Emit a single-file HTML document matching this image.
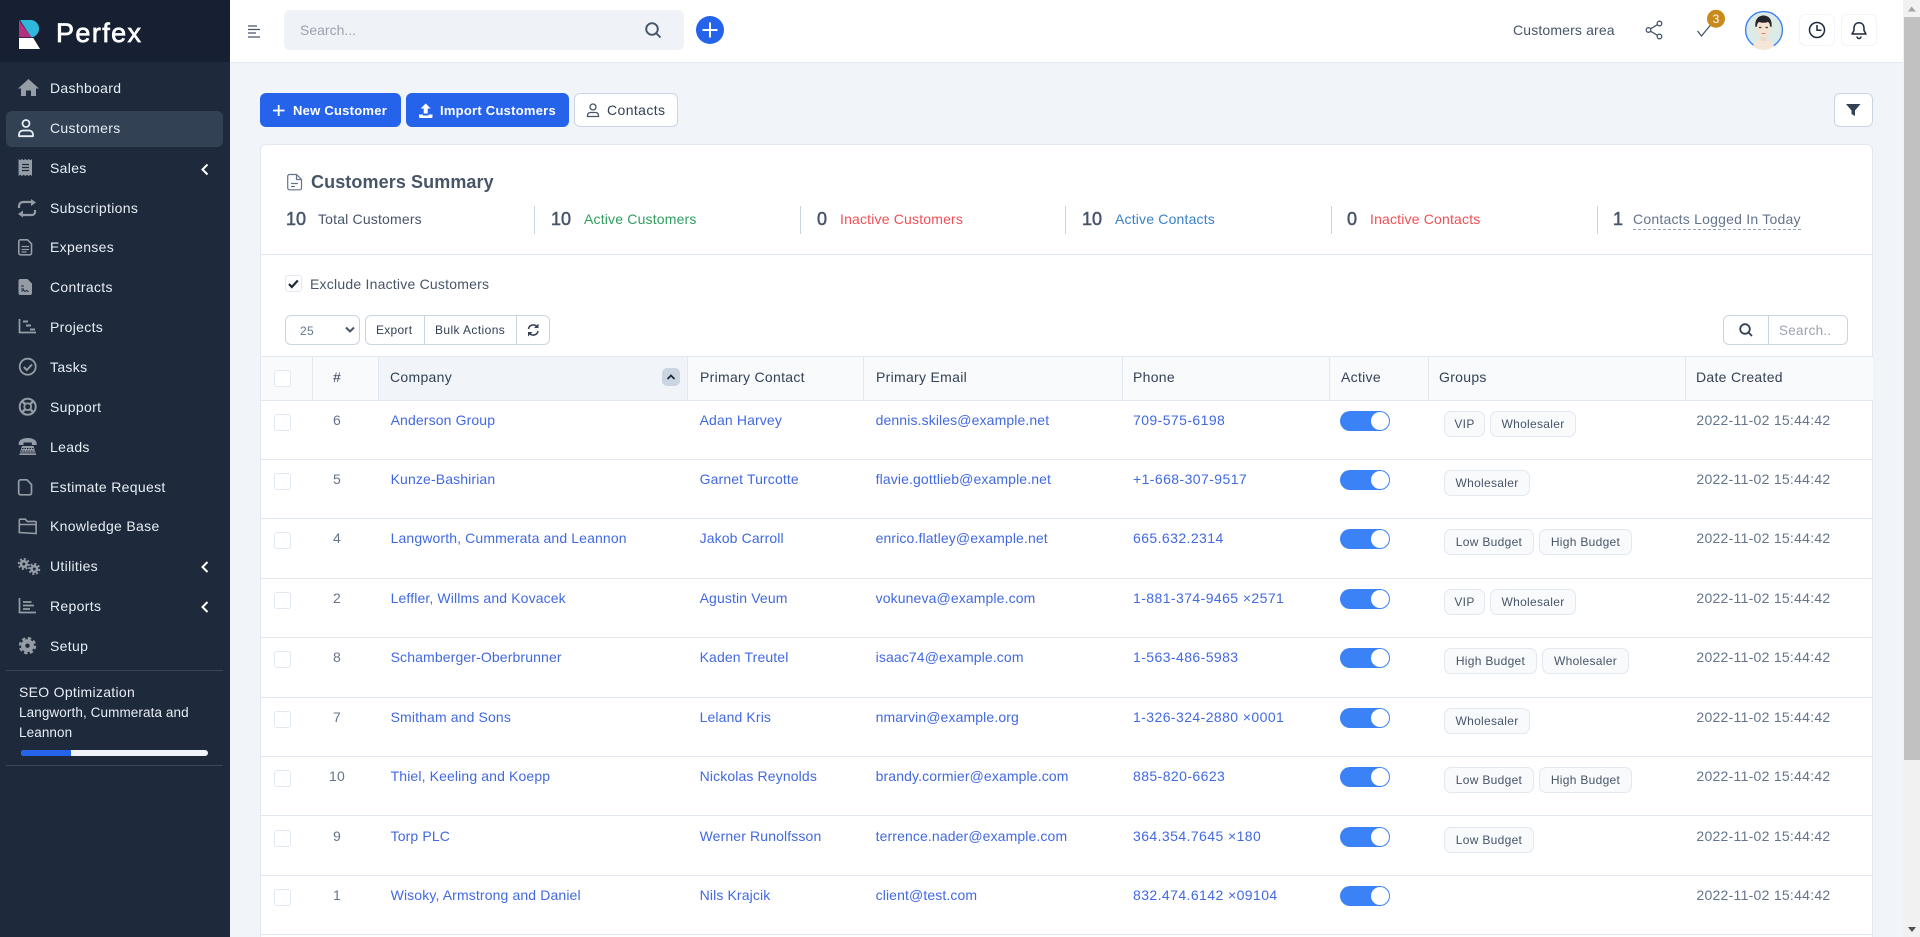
<!DOCTYPE html>
<html lang="en"><head><meta charset="utf-8"><title>Customers</title>
<style>
*{box-sizing:border-box}
html,body{margin:0;padding:0;width:1920px;height:937px;overflow:hidden;background:#f1f5f9;font-family:"Liberation Sans",sans-serif;font-size:14px;color:#475569}
#wrap{position:relative;width:1920px;height:937px;overflow:hidden}
.a,.t{position:absolute}
.t{white-space:nowrap;line-height:20px;letter-spacing:.27px}
#side{left:0;top:0;width:230px;height:937px;background:#1e293b}
#logo{left:0;top:0;width:230px;height:62px;background:#172033}
.m{left:50px;color:#e7edf4;letter-spacing:.32px}
#top{left:230px;top:0;width:1673px;height:63px;background:#fff;border-bottom:1px solid #e2e8f0}
.btn{top:93px;height:34px;border-radius:6px;background:#2563eb;color:#fff;font-weight:bold;font-size:13px;line-height:35px;letter-spacing:.25px}
.wbtn{background:#fff;border:1px solid #cbd5e1;color:#334155;font-weight:normal;font-size:14px}
#card{left:260px;top:144px;width:1613px;height:793px;background:#fff;border:1px solid #e2e8f0;border-bottom:0;border-radius:6px 6px 0 0}
.n{top:209px;font-size:18px;color:#475569;-webkit-text-stroke:.5px #475569;letter-spacing:0}
.l{top:209px;letter-spacing:.18px}
.dv{top:206px;width:1px;height:28px;background:#cbd5e1}
.box{background:#fff;border:1px solid #cbd5e1}
.s12{font-size:12px}
.hd{top:356px;height:45px;background:#f8fafc;border-top:1px solid #e2e8f0;border-bottom:1px solid #e2e8f0;border-right:1px solid #e2e8f0}
.h{top:367px;color:#334155;letter-spacing:.3px}
.r{left:261px;width:1612px;height:60.4px;border-bottom:1px solid #e2e8f0}
.r .t{top:10px}
.id{left:26px;width:100px;text-align:center;color:#64748b}
.c{left:129.6px;color:#4169e1;letter-spacing:.13px !important}
.p{left:438.6px;color:#4169e1;letter-spacing:.13px !important}
.e{left:614.6px;color:#4169e1;letter-spacing:.12px !important}
.f{left:872px;color:#4169e1;letter-spacing:.42px !important}
.d{left:1435.4px;color:#64748b;letter-spacing:.27px}
.cb{left:13px;top:14px;width:17px;height:17px;border:1px solid #e2e8f0;border-radius:3px;background:#fff}
.tg{left:1079px;top:11px;width:50px;height:20px;border-radius:10px;background:#3b82f6}
.tg i{position:absolute;right:1px;top:1px;width:18px;height:18px;border-radius:9px;background:#fff}
.tag{position:absolute;top:11px;height:26px;line-height:24px;border:1px solid #e2e8f0;border-radius:7px;background:#f8fafc;font-size:12px;text-align:center;color:#475569;letter-spacing:.3px}
</style></head><body>
<div id="wrap">

<div class="a" id="side"></div>
<div class="a" id="logo"></div>
<div class="a" style="left:6px;top:111px;width:217px;height:36px;background:#334155;border-radius:6px"></div>
<div class="t" style="left:56px;top:16px;font-size:27px;line-height:34px;color:#fff;-webkit-text-stroke:.7px #fff;letter-spacing:1.4px">Perfex</div>

<div class="t m" style="top:78px">Dashboard</div>
<div class="t m" style="top:118px">Customers</div>
<div class="t m" style="top:158px">Sales</div>
<div class="t m" style="top:198px">Subscriptions</div>
<div class="t m" style="top:237px">Expenses</div>
<div class="t m" style="top:277px">Contracts</div>
<div class="t m" style="top:317px">Projects</div>
<div class="t m" style="top:357px">Tasks</div>
<div class="t m" style="top:397px">Support</div>
<div class="t m" style="top:437px">Leads</div>
<div class="t m" style="top:477px">Estimate Request</div>
<div class="t m" style="top:516px">Knowledge Base</div>
<div class="t m" style="top:556px">Utilities</div>
<div class="t m" style="top:596px">Reports</div>
<div class="t m" style="top:636px">Setup</div>

<div class="a" style="left:6px;top:670px;width:217px;height:1px;background:#3a4658"></div>
<div class="t" style="left:19px;top:682px;color:#e7edf4;letter-spacing:.3px">SEO Optimization</div>
<div class="t" style="left:19px;top:703px;color:#e7edf4;font-size:13.5px;letter-spacing:.1px">Langworth, Cummerata and</div>
<div class="t" style="left:19px;top:723px;color:#e7edf4;font-size:13.5px;letter-spacing:.1px">Leannon</div>
<div class="a" style="left:21px;top:750px;width:187px;height:6px;background:#f1f5f9;border-radius:3px;overflow:hidden"><div style="width:50px;height:6px;background:#2563eb"></div></div>
<div class="a" style="left:6px;top:765px;width:217px;height:1px;background:#3a4658"></div>

<div class="a" id="top"></div>
<div class="a" style="left:284px;top:10px;width:400px;height:40px;background:#eff2f7;border-radius:6px"></div>
<div class="t" style="left:300px;top:20px;color:#9ca3af;letter-spacing:0">Search...</div>
<div class="t" style="left:1513px;top:20px;color:#475569;letter-spacing:.15px">Customers area</div>
<div class="a" style="left:1799px;top:14px;width:36px;height:32px;border:1px solid #f1f5f9;border-radius:6px"></div>
<div class="a" style="left:1841px;top:14px;width:36px;height:32px;border:1px solid #f1f5f9;border-radius:6px"></div>

<div class="a btn" style="left:260px;width:141px;padding-left:33px">New Customer</div>
<div class="a btn" style="left:406px;width:163px;padding-left:34px">Import Customers</div>
<div class="a btn wbtn" style="left:574px;width:104px;padding-left:32px;line-height:32px;letter-spacing:.4px">Contacts</div>
<div class="a btn wbtn" style="left:1834px;width:39px"></div>

<div class="a" id="card"></div>
<div class="t" style="left:311px;top:172px;font-size:18px;font-weight:bold;color:#475569;letter-spacing:.1px">Customers Summary</div>

<div class="t n" style="left:286px">10</div><div class="t l" style="left:318px">Total Customers</div>
<div class="a dv" style="left:534px"></div>
<div class="t n" style="left:551px">10</div><div class="t l" style="left:584px;color:#2f9e5f">Active Customers</div>
<div class="a dv" style="left:800px"></div>
<div class="t n" style="left:817px">0</div><div class="t l" style="left:840px;color:#ef4f55">Inactive Customers</div>
<div class="a dv" style="left:1065px"></div>
<div class="t n" style="left:1082px">10</div><div class="t l" style="left:1115px;color:#3a80c8">Active Contacts</div>
<div class="a dv" style="left:1331px"></div>
<div class="t n" style="left:1347px">0</div><div class="t l" style="left:1370px;color:#ef4f55">Inactive Contacts</div>
<div class="a dv" style="left:1597px"></div>
<div class="t n" style="left:1613px">1</div><div class="t l" style="left:1633px;color:#64748b;border-bottom:1px dashed #94a3b8;height:21px;letter-spacing:.22px">Contacts Logged In Today</div>

<div class="a" style="left:261px;top:254px;width:1611px;height:1px;background:#e2e8f0"></div>

<div class="a" style="left:285px;top:275px;width:17px;height:17px;border:1px solid #e2e8f0;border-radius:3px"></div>
<div class="t" style="left:310px;top:274px;color:#475569;letter-spacing:.22px">Exclude Inactive Customers</div>

<div class="a box" style="left:285px;top:315px;width:75px;height:30px;border-radius:6px"></div>
<div class="t s12" style="left:300px;top:321px;color:#64748b">25</div>
<div class="a box" style="left:365px;top:315px;width:185px;height:30px;border-radius:6px"></div>
<div class="a" style="left:424px;top:315px;width:1px;height:30px;background:#cbd5e1"></div>
<div class="a" style="left:516px;top:315px;width:1px;height:30px;background:#cbd5e1"></div>
<div class="t s12" style="left:376px;top:320px;color:#334155">Export</div>
<div class="t s12" style="left:435px;top:320px;color:#334155;letter-spacing:.4px">Bulk Actions</div>

<div class="a box" style="left:1723px;top:315px;width:125px;height:30px;border-radius:6px"></div>
<div class="a" style="left:1768px;top:315px;width:1px;height:30px;background:#cbd5e1"></div>
<div class="t" style="left:1779px;top:321px;color:#9ca3af;font-size:13.5px">Search..</div>

<div class="a hd" style="left:261px;width:52px"></div>
<div class="a hd" style="left:313px;width:66px"></div>
<div class="a hd" style="left:379px;width:309px;background:#f1f5f9"></div>
<div class="a hd" style="left:688px;width:176px"></div>
<div class="a hd" style="left:864px;width:259px"></div>
<div class="a hd" style="left:1123px;width:207px"></div>
<div class="a hd" style="left:1330px;width:99px"></div>
<div class="a hd" style="left:1429px;width:257px"></div>
<div class="a hd" style="left:1686px;width:187px;border-right:0"></div>
<div class="a" style="left:274px;top:370px;width:17px;height:17px;border:1px solid #e2e8f0;border-radius:3px;background:#fff"></div>
<div class="t h" style="left:333px">#</div>
<div class="t h" style="left:390px">Company</div>
<div class="a" style="left:662px;top:368px;width:18px;height:18px;background:#cbd5e1;border-radius:5px"></div>
<div class="t h" style="left:700px">Primary Contact</div>
<div class="t h" style="left:876px">Primary Email</div>
<div class="t h" style="left:1133px">Phone</div>
<div class="t h" style="left:1341px">Active</div>
<div class="t h" style="left:1439px">Groups</div>
<div class="t h" style="left:1696px">Date Created</div>

<div class="a r" style="top:399.7px"><i class="a cb"></i><div class="t id">6</div><div class="t c">Anderson Group</div><div class="t p">Adan Harvey</div><div class="t e">dennis.skiles@example.net</div><div class="t f">709-575-6198</div><div class="a tg"><i></i></div><span class="tag" style="left:1183px;width:41px">VIP</span><span class="tag" style="left:1229px;width:86px">Wholesaler</span><div class="t d">2022-11-02 15:44:42</div></div>

<div class="a r" style="top:459.1px"><i class="a cb"></i><div class="t id">5</div><div class="t c">Kunze-Bashirian</div><div class="t p">Garnet Turcotte</div><div class="t e">flavie.gottlieb@example.net</div><div class="t f">+1-668-307-9517</div><div class="a tg"><i></i></div><span class="tag" style="left:1183px;width:86px">Wholesaler</span><div class="t d">2022-11-02 15:44:42</div></div>

<div class="a r" style="top:518.4px"><i class="a cb"></i><div class="t id">4</div><div class="t c">Langworth, Cummerata and Leannon</div><div class="t p">Jakob Carroll</div><div class="t e">enrico.flatley@example.net</div><div class="t f">665.632.2314</div><div class="a tg"><i></i></div><span class="tag" style="left:1183px;width:90px">Low Budget</span><span class="tag" style="left:1278px;width:93px">High Budget</span><div class="t d">2022-11-02 15:44:42</div></div>

<div class="a r" style="top:577.9px"><i class="a cb"></i><div class="t id">2</div><div class="t c">Leffler, Willms and Kovacek</div><div class="t p">Agustin Veum</div><div class="t e">vokuneva@example.com</div><div class="t f">1-881-374-9465 ×2571</div><div class="a tg"><i></i></div><span class="tag" style="left:1183px;width:41px">VIP</span><span class="tag" style="left:1229px;width:86px">Wholesaler</span><div class="t d">2022-11-02 15:44:42</div></div>

<div class="a r" style="top:637.3px"><i class="a cb"></i><div class="t id">8</div><div class="t c">Schamberger-Oberbrunner</div><div class="t p">Kaden Treutel</div><div class="t e">isaac74@example.com</div><div class="t f">1-563-486-5983</div><div class="a tg"><i></i></div><span class="tag" style="left:1183px;width:93px">High Budget</span><span class="tag" style="left:1281px;width:87px">Wholesaler</span><div class="t d">2022-11-02 15:44:42</div></div>

<div class="a r" style="top:696.7px"><i class="a cb"></i><div class="t id">7</div><div class="t c">Smitham and Sons</div><div class="t p">Leland Kris</div><div class="t e">nmarvin@example.org</div><div class="t f">1-326-324-2880 ×0001</div><div class="a tg"><i></i></div><span class="tag" style="left:1183px;width:86px">Wholesaler</span><div class="t d">2022-11-02 15:44:42</div></div>

<div class="a r" style="top:756.1px"><i class="a cb"></i><div class="t id">10</div><div class="t c">Thiel, Keeling and Koepp</div><div class="t p">Nickolas Reynolds</div><div class="t e">brandy.cormier@example.com</div><div class="t f">885-820-6623</div><div class="a tg"><i></i></div><span class="tag" style="left:1183px;width:90px">Low Budget</span><span class="tag" style="left:1278px;width:93px">High Budget</span><div class="t d">2022-11-02 15:44:42</div></div>

<div class="a r" style="top:815.6px"><i class="a cb"></i><div class="t id">9</div><div class="t c">Torp PLC</div><div class="t p">Werner Runolfsson</div><div class="t e">terrence.nader@example.com</div><div class="t f">364.354.7645 ×180</div><div class="a tg"><i></i></div><span class="tag" style="left:1183px;width:90px">Low Budget</span><div class="t d">2022-11-02 15:44:42</div></div>

<div class="a r" style="top:874.9px"><i class="a cb"></i><div class="t id">1</div><div class="t c">Wisoky, Armstrong and Daniel</div><div class="t p">Nils Krajcik</div><div class="t e">client@test.com</div><div class="t f">832.474.6142 ×09104</div><div class="a tg"><i></i></div><div class="t d">2022-11-02 15:44:42</div></div>

<div class="a" style="left:1903px;top:0;width:17px;height:937px;background:#f1f1f1"></div>
<div class="a" style="left:1904px;top:17px;width:16px;height:743px;background:#c1c1c1"></div>

<svg class="a" style="left:0;top:0" width="1920" height="937" viewBox="0 0 1920 937">
<path d="M19 20V37.300H31.300Z" fill="#b5307f"/>
<path d="M20 20H31.300A8.700 8.700 0 0 1 31.300 37.300Z" fill="#2fb8dc"/>
<path d="M19 38H33.300L40 49H19Z" fill="#fff"/>
<g fill="#959ca6" stroke="none">
<path d="M28.500 79L18 88.500H21V96H26V90.500H31V96H36V88.500H39Z"/>
<path d="M18.500 159l1.700 1.200 1.700-1.200 1.700 1.200 1.700-1.200 1.700 1.200 1.700-1.200 1.700 1.200 1.600-1.200V176l-1.600-1.200-1.700 1.200-1.700-1.200-1.700 1.200-1.700-1.200-1.700 1.200-1.700-1.200-1.600 1.200Z"/>
<path d="M31 199l5 3.500-5 3.500Z"/><path d="M23 210.500l-5 3.500 5 3.500Z"/>
<path d="M20.500 279h7l4.500 4.500V293a2 2 0 0 1-2 2h-9.500a2 2 0 0 1-2-2v-12a2 2 0 0 1 2-2Z"/>
<path d="M18.700 443.500c0-3.500 4-5.500 9-5.500s9 2 9 5.500v1.500h-4.800v-2.500h-8.400v2.500h-4.800Z"/>
<path d="M22 446h11.500l2 6.500h-15.500Z"/><rect x="19.500" y="453.300" width="16.500" height="1.700"/>
</g>
<path d="M21 286h3M21 289h3M21.500 291.500l2-1.500 1.500 1.500 1.500-1 2 1" stroke="#1e293b" stroke-width="1" fill="none"/>
<path d="M22 164.500h7M22 167.500h7M22 170.500h7" stroke="#1e293b" stroke-width="1.300" fill="none"/>
<path d="M22 448.500h11.500M21 451h13.500" stroke="#1e293b" stroke-width="1" stroke-dasharray="1.500 1" fill="none"/>
<g fill="none" stroke="#959ca6" stroke-width="1.800">
<path d="M19 208v-2a4 4 0 0 1 4-4h9" stroke-width="2.200"/>
<path d="M35 210v2a3 3 0 0 1-3 3H22" stroke-width="2.200"/>
<path d="M20.500 239.800h7l4 4V253a1.800 1.800 0 0 1-1.800 1.800H20.500A1.800 1.800 0 0 1 18.800 253V241.600a1.800 1.800 0 0 1 1.700-1.800Z" stroke-width="1.600"/>
<path d="M21.500 246.500h7.500M21.500 249.500h7.500M21.500 252h5" stroke-width="1.200"/>
<path d="M19.500 319v13.500H36" stroke-width="1.700"/>
<path d="M23 321.500h5M26 325.500h5M30 329.500h5" stroke-width="2"/>
<circle cx="27.700" cy="366.700" r="8"/>
<path d="M23.800 367l3 3 5.200-5.500" stroke-width="2"/>
<circle cx="27.700" cy="406.700" r="8" stroke-width="2"/><circle cx="27.700" cy="406.700" r="3.400"/>
<path d="M22 401l3.200 3.200M33.400 401l-3.200 3.200M22 412.400l3.200-3.200M33.400 412.400l-3.200-3.200" stroke-width="2.400"/>
<path d="M20.500 479.800h6.500l4.500 4.700v8.500a1.800 1.800 0 0 1-1.800 1.800H20.500a1.800 1.800 0 0 1-1.800-1.800V481.600a1.800 1.800 0 0 1 1.800-1.800Z" stroke-width="1.700"/>
<path d="M19.300 532.500V520.200a1 1 0 0 1 1-1h5l2 2.200h7.800a1 1 0 0 1 1 1v11.100ZM19.300 524.500h16.800" stroke-width="1.600"/>
<path d="M19.500 598v14.500H36" stroke-width="1.700"/>
<path d="M23 602h8.500M23 605.500h11M23 609h7" stroke-width="1.800"/>
<circle cx="23.800" cy="564" r="2.800" stroke-width="2.600"/><circle cx="23.800" cy="564" r="5" stroke-width="2" stroke-dasharray="2 1.900"/>
<circle cx="34.300" cy="569" r="2.800" stroke-width="2.600"/><circle cx="34.300" cy="569" r="5" stroke-width="2" stroke-dasharray="2 1.900"/>
<circle cx="27.500" cy="645.700" r="4.300" stroke-width="4.200"/><circle cx="27.500" cy="645.700" r="7.500" stroke-width="2.400" stroke-dasharray="3.400 2.500"/>
</g>
<g fill="none" stroke="#e7edf4" stroke-width="1.800">
<circle cx="26" cy="123.500" r="3.500"/>
<path d="M19 136.200v-1.700a4 4 0 0 1 4-4h6a4 4 0 0 1 4 4v1.700Z" stroke-linejoin="round"/>
</g>
<g fill="none" stroke="#fff" stroke-width="2">
<path d="M207.500 164.500l-5 5 5 5M207.500 562l-5 5 5 5M207.500 602l-5 5 5 5"/>
</g>
<path d="M248 26h9M248 29.500h12M248 33h8M248 37h12" stroke="#475569" stroke-width="1.300"/>
<g fill="none" stroke="#475569" stroke-width="1.900"><circle cx="652" cy="29" r="5.800"/><path d="M656.300 33.300l4.200 4.200"/></g>
<circle cx="710" cy="30" r="14" fill="#2563eb"/><path d="M702.500 30h15M710 22.500v15" stroke="#fff" stroke-width="2"/>
<g fill="none" stroke="#475569" stroke-width="1.300"><circle cx="1659.500" cy="23.500" r="2.300"/><circle cx="1648.500" cy="30" r="2.300"/><circle cx="1659.500" cy="36.500" r="2.300"/><path d="M1650.500 28.800l7-4.100M1650.500 31.200l7 4.100"/><path d="M1697.500 31l4 5 9-11"/></g>
<circle cx="1716" cy="18.700" r="9" fill="#c98a1b"/>
<text x="1716" y="23" font-family="Liberation Sans" font-size="12" fill="#fff" text-anchor="middle">3</text>
<circle cx="1764" cy="30" r="18.400" fill="#dcebe5" stroke="#3b82f6" stroke-width="1.400"/>
<path d="M1753 46.500c1-5 5-6.500 10.500-6.500s9.500 1.500 10.500 6.500a17.500 17.500 0 0 1-21 0Z" fill="#f6e6d8"/>
<path d="M1760.500 35h6v6h-6Z" fill="#f0d9c6"/>
<ellipse cx="1763.500" cy="28" rx="7" ry="9" fill="#f5e2d0"/>
<path d="M1755.500 27c-1-7 2.500-11.500 8-11.500s9 4.500 8 11.500l-1.500-.5c0-2.500-.8-4-2-4.500-3 1-6 1-9 0-1.200.5-2 2-2 4.500Z" fill="#26262a"/>
<path d="M1759 27.500h2.500M1765.500 27.500h2.500" stroke="#444" stroke-width="1.200"/>
<path d="M1761.500 33.500h4" stroke="#c08a80" stroke-width="1"/>
<g fill="none" stroke="#1e293b" stroke-width="1.500"><circle cx="1817" cy="30" r="7.500"/><path d="M1817 25v5.300h4.500"/><path d="M1859 22.800c-3.400 0-5 2.500-5 5.500v2.200l-2 3.500h14l-2-3.500v-2.200c0-3-1.600-5.500-5-5.500Z" stroke-linejoin="round"/><path d="M1857 36.500a2 2 0 0 0 4 0"/></g>
<path d="M273 110.500h11.500M278.700 105v11" stroke="#fff" stroke-width="1.800"/>
<path d="M425.700 103.500l-5 5h3v5h4v-5h3ZM419 114.500h4v1h5.500v-1h4v2.500a1 1 0 0 1-1 1H420a1 1 0 0 1-1-1Z" fill="#fff"/>
<g fill="none" stroke="#475569" stroke-width="1.300"><circle cx="593" cy="107" r="3"/><path d="M587.500 116.500v-1a3 3 0 0 1 3-3h5a3 3 0 0 1 3 3v1Z"/></g>
<path d="M1846 104h14.500l-5.500 6.500v5.500l-3.500-2v-3.500Z" fill="#334155"/>
<g fill="none" stroke="#64748b" stroke-width="1.200"><path d="M289.500 174.500h7l5 5V188a1.800 1.800 0 0 1-1.800 1.800H289.500a1.800 1.800 0 0 1-1.800-1.800V176.300a1.800 1.800 0 0 1 1.800-1.800Z"/><path d="M296.500 174.500v5h5M291 183.500h7M291 186.500h4"/></g>
<path d="M289 284l2.800 3 6-6.500" fill="none" stroke="#1e293b" stroke-width="2.200"/>
<path d="M346 327.500l4 4 4-4" fill="none" stroke="#475569" stroke-width="2"/>
<g fill="none" stroke="#334155" stroke-width="1.500"><path d="M528.500 329a4.800 4.800 0 0 1 8.300-2.500"/><path d="M538 331a4.800 4.800 0 0 1-8.300 2.500"/></g>
<path d="M538.500 323.500v4.500h-4.500ZM528 336.500V332h4.500Z" fill="#334155"/>
<path d="M667.500 379l3.500-3.500 3.500 3.500" fill="none" stroke="#1e293b" stroke-width="1.800"/>
<g fill="none" stroke="#334155" stroke-width="1.800"><circle cx="1745" cy="329" r="4.800"/><path d="M1748.500 332.500l3.500 3.500"/></g>
<path d="M1911.500 6.500l-3.500 5h8Z" fill="#a3a3a3"/>
<path d="M1908 927h8l-4 5Z" fill="#505050"/>
</svg>
</div>
</body></html>
